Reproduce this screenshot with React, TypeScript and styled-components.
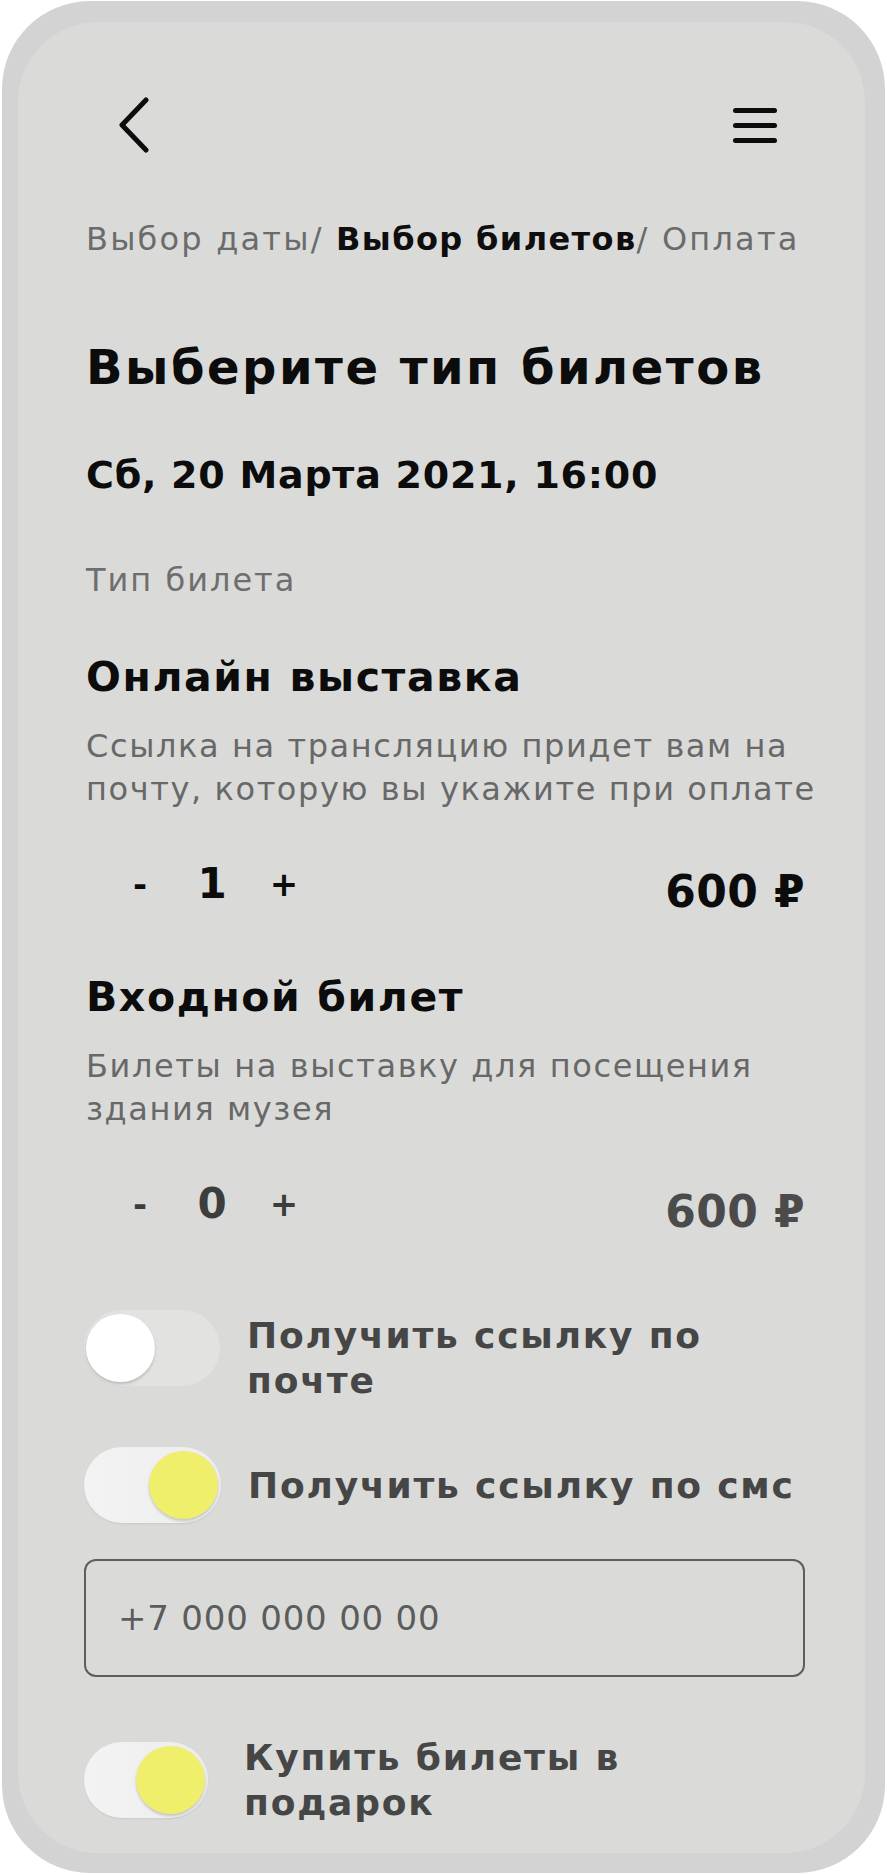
import styled, { createGlobalStyle } from "styled-components";

const GlobalStyle = createGlobalStyle`
  html, body {
    margin: 0;
    padding: 0;
    background: #ffffff;
  }
  body {
    font-family: "DejaVu Sans", "Noto Sans", sans-serif;
    color: #101010;
  }
  * {
    box-sizing: border-box;
  }
`;

const Frame = styled.div`
  width: 883px;
  height: 1872px;
  margin: 1px 2px 0 2px;
  padding: 21px 20px 20px 16px;
  background: #d3d3d3;
  border-radius: 88px;
`;

const Screen = styled.div`
  height: 100%;
  padding: 76px 60px 0 68px;
  background: #dadbd9;
  border-radius: 80px;
  overflow: hidden;
  display: flex;
  flex-direction: column;

  & > * {
    flex-shrink: 0;
  }
`;

const Header = styled.div`
  display: flex;
  align-items: center;
  justify-content: space-between;
  height: 54px;
  padding: 0 28px 0 33px;
`;

const IconButton = styled.button`
  border: 0;
  padding: 0;
  background: none;
  display: flex;
  align-items: center;
  cursor: pointer;
`;

const Burger = styled.span`
  width: 44px;
  display: flex;
  flex-direction: column;
  gap: 10px;

  i {
    display: block;
    height: 5px;
    border-radius: 3px;
    background: #0c0c0c;
  }
`;

const Breadcrumbs = styled.nav`
  margin-top: 67px;
  font-size: 32px;
  line-height: 40px;
  letter-spacing: 2.2px;
  color: #6b6b6b;
  white-space: nowrap;

  b {
    color: #0e0e0e;
    font-weight: 700;
    letter-spacing: 1.4px;
  }
`;

const Title = styled.h1`
  margin: 81px 0 0;
  font-size: 48px;
  line-height: 54px;
  letter-spacing: 2.5px;
  font-weight: 700;
  color: #0c0c0c;
`;

const DateLine = styled.h2`
  margin: 58px 0 0;
  font-size: 38px;
  line-height: 46px;
  letter-spacing: 0.75px;
  font-weight: 700;
  color: #0c0c0c;
`;

const Caption = styled.div`
  margin-top: 65px;
  font-size: 32px;
  line-height: 34px;
  letter-spacing: 2px;
  color: #6e6e6e;
`;

const Ticket = styled.section`
  margin-top: 57px;

  & + & {
    margin-top: 59px;
  }
`;

const TicketName = styled.h3`
  margin: 0;
  font-size: 41px;
  line-height: 46px;
  letter-spacing: 1.6px;
  font-weight: 700;
  color: #0c0c0c;
`;

const TicketText = styled.p`
  margin: 25px 0 0;
  font-size: 32px;
  line-height: 43px;
  letter-spacing: 1.6px;
  color: #686868;

  span {
    display: block;
    white-space: nowrap;
  }
`;

const CounterRow = styled.div`
  margin-top: 47px;
  display: flex;
  align-items: flex-start;
  justify-content: space-between;
`;

const Counter = styled.div<{ $muted?: boolean }>`
  margin-left: 18px;
  display: flex;
  color: ${(p) => (p.$muted ? "#3d3d3d" : "#0c0c0c")};
`;

const CounterCell = styled.span<{ $sign?: boolean }>`
  width: 72px;
  height: 52px;
  line-height: 52px;
  text-align: center;
  font-size: ${(p) => (p.$sign ? "34px" : "42px")};
  font-weight: ${(p) => (p.$sign ? 700 : 600)};
`;

const Price = styled.span<{ $muted?: boolean }>`
  padding-top: 11px;
  font-size: 44px;
  line-height: 46px;
  letter-spacing: 0.4px;
  font-weight: 700;
  color: ${(p) => (p.$muted ? "#4b4b4b" : "#0c0c0c")};
`;

const ToggleRow = styled.label<{ $space: number; $gap: number }>`
  margin-top: ${(p) => p.$space}px;
  display: flex;
  align-items: center;
  gap: ${(p) => p.$gap}px;
  cursor: pointer;
`;

const Track = styled.span<{ $on: boolean; $width: number }>`
  flex: none;
  margin-left: -2px;
  width: ${(p) => p.$width}px;
  height: 76px;
  padding: 4px 3px 4px 2px;
  border-radius: 38px;
  display: flex;
  justify-content: ${(p) => (p.$on ? "flex-end" : "flex-start")};
  background: ${(p) =>
    p.$on ? "linear-gradient(90deg, #f3f3f3, #ededed)" : "#e2e3e1"};
  box-shadow: ${(p) =>
    p.$on ? "0 1px 2px rgba(0, 0, 0, 0.08)" : "none"};
`;

const Knob = styled.span<{ $on: boolean }>`
  width: 69px;
  height: 68px;
  border-radius: 50%;
  background: ${(p) => (p.$on ? "#f0ef6b" : "#ffffff")};
  box-shadow: 0 2px 3px rgba(0, 0, 0, 0.18);
`;

const ToggleText = styled.span<{ $shift?: number }>`
  padding-top: ${(p) => p.$shift ?? 0}px;
  margin-bottom: ${(p) => -(p.$shift ?? 0)}px;
  font-size: 36px;
  line-height: 45px;
  letter-spacing: 1.8px;
  font-weight: 700;
  color: #464646;
`;

const PhoneInput = styled.input`
  margin: 36px 0 0 -2px;
  width: 721px;
  height: 118px;
  padding: 0 0 0 32px;
  border: 2px solid #5e5e5e;
  border-radius: 12px;
  background: transparent;
  font-family: inherit;
  font-size: 34px;
  letter-spacing: 0.8px;
  color: #5c5c5c;
  outline: none;

  &::placeholder {
    color: #5c5c5c;
  }
`;

type TicketInfo = {
  name: string;
  lines: string[];
  count: number;
  price: string;
  muted?: boolean;
};

const tickets: TicketInfo[] = [
  {
    name: "Онлайн выставка",
    lines: [
      "Ссылка на трансляцию придет вам на",
      "почту, которую вы укажите при оплате",
    ],
    count: 1,
    price: "600 ₽",
  },
  {
    name: "Входной билет",
    lines: ["Билеты на выставку для посещения", "здания музея"],
    count: 0,
    price: "600 ₽",
    muted: true,
  },
];

const Toggle = ({
  on,
  width,
  space,
  gap,
  shift,
  children,
}: {
  on: boolean;
  width: number;
  space: number;
  gap: number;
  shift?: number;
  children: React.ReactNode;
}) => (
  <ToggleRow $space={space} $gap={gap}>
    <Track $on={on} $width={width}>
      <Knob $on={on} />
    </Track>
    <ToggleText $shift={shift}>{children}</ToggleText>
  </ToggleRow>
);

const App = () => {
  return (
    <>
      <GlobalStyle />
      <Frame>
        <Screen>
          <Header>
            <IconButton aria-label="Назад">
              <svg width="30" height="56" viewBox="0 0 30 56" fill="none">
                <path
                  d="M27 3 L3 28 L27 53"
                  stroke="#0c0c0c"
                  strokeWidth="5"
                  strokeLinecap="round"
                  strokeLinejoin="round"
                />
              </svg>
            </IconButton>
            <IconButton aria-label="Меню">
              <Burger>
                <i />
                <i />
                <i />
              </Burger>
            </IconButton>
          </Header>

          <Breadcrumbs>
            Выбор даты/ <b>Выбор билетов</b>/ Оплата
          </Breadcrumbs>

          <Title>Выберите тип билетов</Title>
          <DateLine>Сб, 20 Марта 2021, 16:00</DateLine>
          <Caption>Тип билета</Caption>

          {tickets.map((t) => (
            <Ticket key={t.name}>
              <TicketName>{t.name}</TicketName>
              <TicketText>
                {t.lines.map((line) => (
                  <span key={line}>{line}</span>
                ))}
              </TicketText>
              <CounterRow>
                <Counter $muted={t.muted}>
                  <CounterCell $sign>-</CounterCell>
                  <CounterCell>{t.count}</CounterCell>
                  <CounterCell $sign>+</CounterCell>
                </Counter>
                <Price $muted={t.muted}>{t.price}</Price>
              </CounterRow>
            </Ticket>
          ))}

          <Toggle on={false} width={136} space={68} gap={27} shift={10}>
            Получить ссылку по
            <br />
            почте
          </Toggle>
          <Toggle on width={137} space={54} gap={27}>
            Получить ссылку по смс
          </Toggle>
          <PhoneInput placeholder="+7 000 000 00 00" />
          <Toggle on width={124} space={58} gap={36}>
            Купить билеты в
            <br />
            подарок
          </Toggle>
        </Screen>
      </Frame>
    </>
  );
};

export default App;
